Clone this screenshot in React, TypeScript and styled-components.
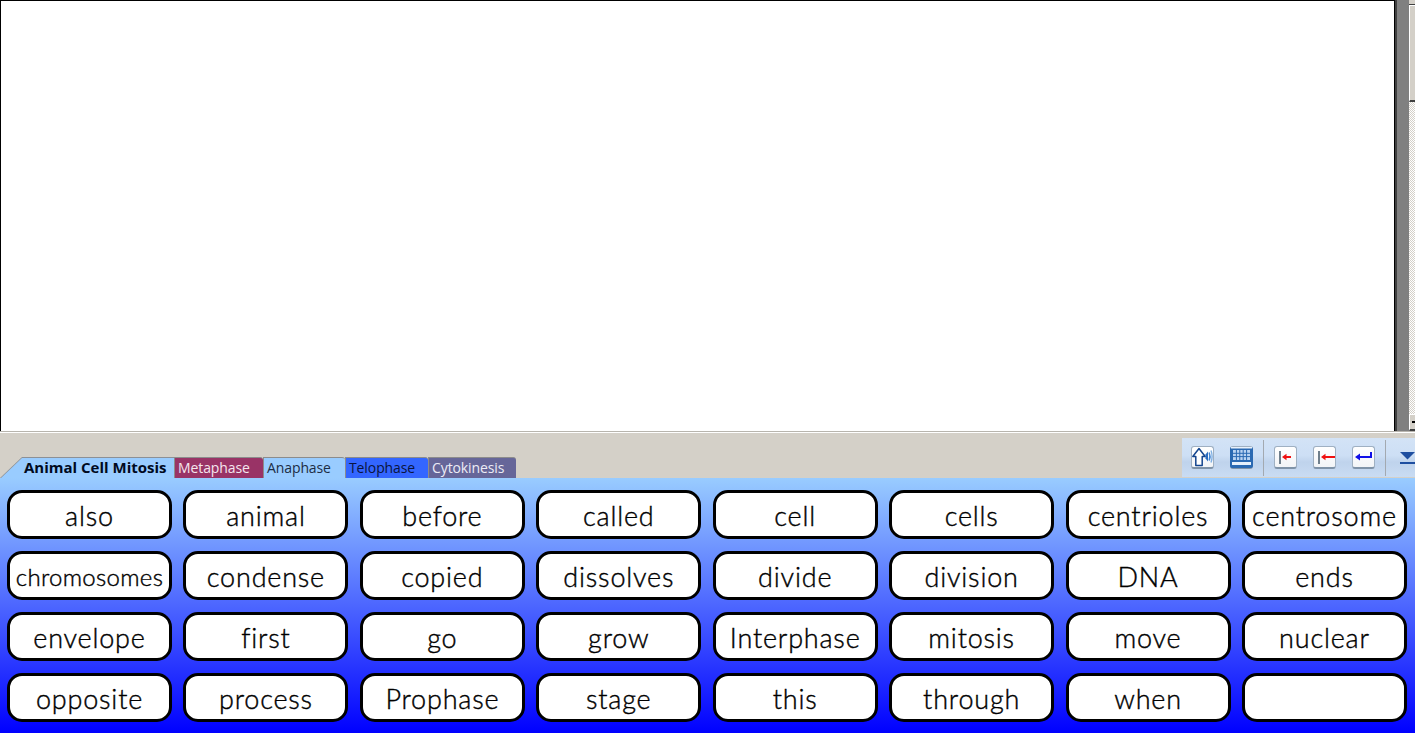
import React from "react";
import styled, { createGlobalStyle } from "styled-components";

const words = [
  "also", "animal", "before", "called", "cell", "cells", "centrioles", "centrosome",
  "chromosomes", "condense", "copied", "dissolves", "divide", "division", "DNA", "ends",
  "envelope", "first", "go", "grow", "Interphase", "mitosis", "move", "nuclear",
  "opposite", "process", "Prophase", "stage", "this", "through", "when", "",
];

const tabs = [
  { label: "Metaphase", bg: "#993366", fg: "#f4e6ee", width: 89 },
  { label: "Anaphase", bg: "#99ccff", fg: "#1c2c44", width: 82 },
  { label: "Telophase", bg: "#3366ff", fg: "#0a1440", width: 83 },
  { label: "Cytokinesis", bg: "#666699", fg: "#ececf6", width: 88 },
];

const GlobalStyle = createGlobalStyle`
  html, body {
    margin: 0;
    padding: 0;
    height: 100%;
    overflow: hidden;
    background: #d4d0c8;
  }
`;

const Page = styled.div`
  width: 1415px;
  height: 733px;
  display: flex;
  flex-direction: column;
  overflow: hidden;
`;

const EditorRow = styled.div`
  height: 431px;
  display: flex;
  flex: none;
`;

const Document = styled.div`
  width: 1395px;
  flex: none;
  box-sizing: border-box;
  background: #fff;
  border-top: 1px solid #000;
  border-left: 1px solid #000;
  border-right: 1px solid #000;
`;

const Gutter = styled.div`
  width: 14px;
  flex: none;
  box-sizing: border-box;
  background: #808080;
  border-left: 2px solid #404040;
`;

const ScrollBar = styled.div`
  width: 6px;
  flex: none;
  display: flex;
  flex-direction: column;
  background-color: #fff;
  background-image: repeating-conic-gradient(#d4d0c8 0 25%, #fff 0 50%);
  background-size: 2px 2px;
`;

const ScrollCap = styled.div`
  height: 5px;
  flex: none;
  background: #d4d0c8;
  border-bottom: 1px solid #404040;
  box-sizing: border-box;
`;

const ScrollThumb = styled.div`
  height: 97px;
  flex: none;
  box-sizing: border-box;
  background: #d4d0c8;
  border-top: 1px solid #fff;
  border-left: 1px solid #fff;
  border-bottom: 2px solid #404040;
`;

const ScrollSpacer = styled.div`
  flex: 1;
`;

const ScrollArrow = styled.div`
  height: 17px;
  flex: none;
  box-sizing: border-box;
  background: #d4d0c8;
  border-top: 1px solid #fff;
  border-left: 1px solid #fff;
  border-bottom: 2px solid #404040;
  display: flex;
  align-items: center;
  padding-left: 2px;
  &::after {
    content: "";
    width: 4px;
    height: 2px;
    background: #000;
  }
`;

const Divider = styled.div`
  height: 2px;
  flex: none;
  background: linear-gradient(#b8b5ae 0 1px, #fff 1px);
`;

const BarRow = styled.div`
  height: 45px;
  flex: none;
  display: flex;
  justify-content: space-between;
  align-items: flex-end;
  background: #d4d0c8;
`;

const TabStrip = styled.div`
  display: flex;
  height: 21px;
`;

const ActiveTab = styled.div`
  position: relative;
  width: 174px;
  height: 21px;
  box-sizing: border-box;
  padding-left: 24px;
  background: #8c9096;
  clip-path: polygon(0 100%, 22px 0, 100% 0, 100% 100%);
  font: bold 15px "Open Sans", "Noto Sans", sans-serif;
  line-height: 21px;
  color: #000a1e;
  white-space: nowrap;
  span {
    position: relative;
  }
  &::before {
    content: "";
    position: absolute;
    inset: 1px 0 0 1px;
    background: #99ccff;
    clip-path: polygon(0 100%, 21px 0, 100% 0, 100% 100%);
  }
`;

const Tab = styled.div<{ $bg: string; $fg: string; $width: number }>`
  width: ${(p) => p.$width}px;
  height: 21px;
  box-sizing: border-box;
  padding-left: 3px;
  background: ${(p) => p.$bg};
  color: ${(p) => p.$fg};
  border-top: 1px solid #8c8c8c;
  border-left: 1px solid #8c8c8c;
  border-top-right-radius: 3px;
  font: 14px "Open Sans", "Noto Sans", sans-serif;
  letter-spacing: -0.1px;
  line-height: 20px;
  white-space: nowrap;
`;

const Toolbar = styled.div`
  width: 233px;
  height: 39px;
  margin-bottom: 1px;
  flex: none;
  box-sizing: border-box;
  display: flex;
  align-items: center;
  overflow: hidden;
  padding-left: 9px;
  background: linear-gradient(#d3e3f6 0%, #cddff5 45%, #bfd3ec 62%, #c9dcf3 100%);
`;

const ToolButton = styled.div<{ $gap?: number }>`
  width: 23px;
  height: 23px;
  flex: none;
  margin-right: ${(p) => p.$gap ?? 16}px;
  box-sizing: border-box;
  border-radius: 3px;
  border: 1px solid #9fb0c2;
  border-bottom: 2px solid #7f93a8;
  background: linear-gradient(#ffffff, #f2f4f7);
  display: flex;
  align-items: center;
  justify-content: center;
  svg {
    display: block;
  }
`;

const Separator = styled.div<{ $gap: number }>`
  width: 1px;
  height: 36px;
  flex: none;
  background: #a3a9b0;
  margin-right: ${(p) => p.$gap}px;
`;

const DropGlyph = styled.svg`
  flex: none;
  display: block;
`;

const WordPanel = styled.div`
  flex: 1;
  box-sizing: border-box;
  padding: 12px 8px 0 7px;
  background: linear-gradient(#99ccff, #0000ff);
  display: grid;
  grid-template-columns: repeat(8, 165px);
  grid-auto-rows: 49px;
  justify-content: space-between;
  row-gap: 12px;
`;

const WordKey = styled.div<{ $small: boolean }>`
  box-sizing: border-box;
  background: #fff;
  border: 3px solid #000;
  border-radius: 15px;
  display: flex;
  align-items: center;
  justify-content: center;
  font-family: Lato, "Open Sans", sans-serif;
  font-weight: 300;
  font-size: ${(p) => (p.$small ? 24 : 27)}px;
  letter-spacing: ${(p) => (p.$small ? 0.3 : 0.8)}px;
  -webkit-text-stroke: 0.4px #000;
  color: #000;
  padding-top: 1px;
  white-space: nowrap;
`;

const SpeakIcon = () => (
  <svg width="21" height="20" viewBox="0 0 21 20">
    <path d="M0.8 9.5 7 1.5 13.2 9.5H10.2V18.5H3.8V9.5Z" fill="#fff" stroke="#14468f" strokeWidth="1.5" strokeLinejoin="round" />
    <path d="M13.5 7.5 16 4.5V14.5L13.5 11.5Z" fill="#2a6cc0" />
    <path d="M17.2 5.5Q18.8 9.5 17.2 13.5" fill="none" stroke="#3f84d4" strokeWidth="1.5" />
    <path d="M19 3.5Q21.2 9.5 19 15.5" fill="none" stroke="#7fb0e4" strokeWidth="1.4" />
  </svg>
);

const KeyboardIcon = () => (
  <svg width="23" height="22" viewBox="0 0 23 22" style={{ margin: -1 }}>
    <rect x="0" y="1" width="23" height="21" rx="2" fill="#2a69b2" />
    <rect x="1" y="1" width="21" height="1.5" fill="#e8f1fb" />
    <rect x="3" y="4" width="17" height="10" fill="#b9d3f2" />
    <path d="M3 7.3H20M3 10.6H20M6.4 4V14M9.8 4V14M13.2 4V14M16.6 4V14" stroke="#2a69b2" strokeWidth="1" />
    <rect x="2" y="16" width="19" height="3" fill="#e6f0fb" />
  </svg>
);

const TabStopIcon = ({ long }: { long?: boolean }) => (
  <svg width="21" height="20" viewBox="0 0 21 20">
    <rect x="4" y="4" width="2" height="13" fill="#6f7f8c" />
    <path d={long ? "M7 10 11.5 6.8V9H21V11H11.5V13.2Z" : "M7 10 11.5 6.8V9H16V11H11.5V13.2Z"} fill="#f01010" />
  </svg>
);

const ReturnIcon = () => (
  <svg width="21" height="20" viewBox="0 0 21 20">
    <path d="M2 10 7 6.5V9H17V5H19V11H7V13.5Z" fill="#1010e8" />
  </svg>
);

const App = () => {
  return (
    <Page>
      <GlobalStyle />
      <EditorRow>
        <Document />
        <Gutter />
        <ScrollBar>
          <ScrollCap />
          <ScrollThumb />
          <ScrollSpacer />
          <ScrollArrow />
        </ScrollBar>
      </EditorRow>
      <Divider />
      <BarRow>
        <TabStrip>
          <ActiveTab>
            <span>Animal Cell Mitosis</span>
          </ActiveTab>
          {tabs.map((t) => (
            <Tab key={t.label} $bg={t.bg} $fg={t.fg} $width={t.width}>
              {t.label}
            </Tab>
          ))}
        </TabStrip>
        <Toolbar>
          <ToolButton><SpeakIcon /></ToolButton>
          <ToolButton $gap={10}><KeyboardIcon /></ToolButton>
          <Separator $gap={10} />
          <ToolButton><TabStopIcon /></ToolButton>
          <ToolButton><TabStopIcon long /></ToolButton>
          <ToolButton $gap={10}><ReturnIcon /></ToolButton>
          <Separator $gap={14} />
          <DropGlyph width="16" height="12" viewBox="0 0 16 12">
            <path d="M0 0H15L7.5 7.5Z" fill="#1f4fa0" />
            <rect x="0" y="10" width="15" height="2" fill="#1f4fa0" />
          </DropGlyph>
        </Toolbar>
      </BarRow>
      <WordPanel>
        {words.map((w, i) => (
          <WordKey key={i} $small={w === "chromosomes"}>{w}</WordKey>
        ))}
      </WordPanel>
    </Page>
  );
};

export default App;
